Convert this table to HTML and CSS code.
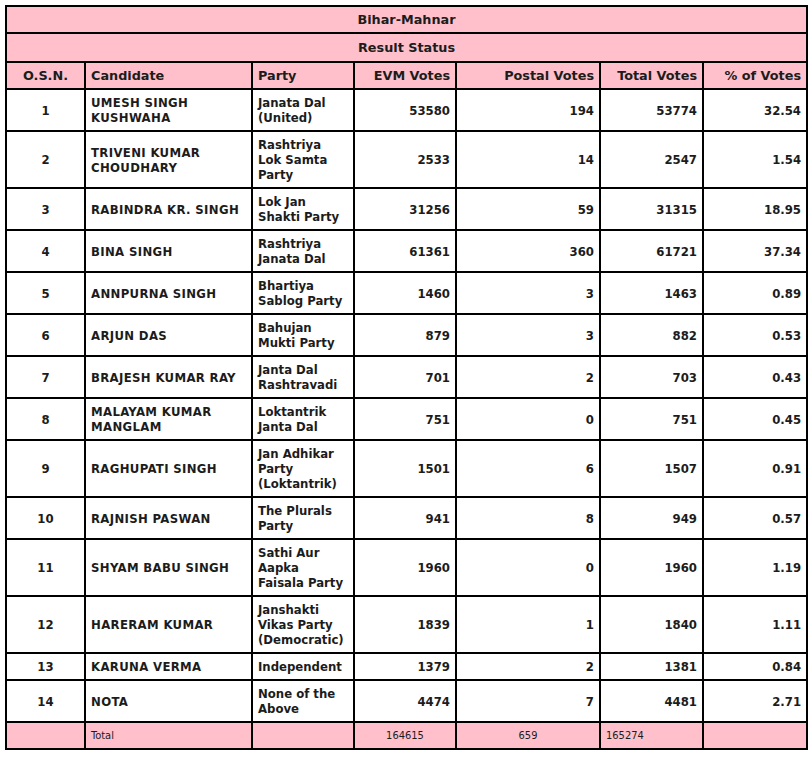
FILE: index.html
```html
<!DOCTYPE html>
<html>
<head>
<meta charset="utf-8">
<link rel="stylesheet" href="styles.css">
</head>
<body>
<table class="result">
  <colgroup>
    <col class="c-sn"><col class="c-cand"><col class="c-party"><col class="c-evm"><col class="c-postal"><col class="c-total"><col class="c-pct">
  </colgroup>
  <thead>
    <tr class="title"><th colspan="7">Bihar-Mahnar</th></tr>
    <tr class="title sub"><th colspan="7">Result Status</th></tr>
    <tr class="head">
      <th class="center">O.S.N.</th>
      <th class="left">Candidate</th>
      <th class="left">Party</th>
      <th class="right">EVM Votes</th>
      <th class="right">Postal Votes</th>
      <th class="right">Total Votes</th>
      <th class="right">% of Votes</th>
    </tr>
  </thead>
  <tbody>
    <tr><td class="center">1</td><td class="cand">UMESH SINGH KUSHWAHA</td><td>Janata Dal (United)</td><td class="right">53580</td><td class="right">194</td><td class="right">53774</td><td class="right">32.54</td></tr>
    <tr><td class="center">2</td><td class="cand">TRIVENI KUMAR CHOUDHARY</td><td>Rashtriya Lok Samta Party</td><td class="right">2533</td><td class="right">14</td><td class="right">2547</td><td class="right">1.54</td></tr>
    <tr><td class="center">3</td><td class="cand">RABINDRA KR. SINGH</td><td>Lok Jan Shakti Party</td><td class="right">31256</td><td class="right">59</td><td class="right">31315</td><td class="right">18.95</td></tr>
    <tr><td class="center">4</td><td class="cand">BINA SINGH</td><td>Rashtriya Janata Dal</td><td class="right">61361</td><td class="right">360</td><td class="right">61721</td><td class="right">37.34</td></tr>
    <tr><td class="center">5</td><td class="cand">ANNPURNA SINGH</td><td>Bhartiya Sablog Party</td><td class="right">1460</td><td class="right">3</td><td class="right">1463</td><td class="right">0.89</td></tr>
    <tr><td class="center">6</td><td class="cand">ARJUN DAS</td><td>Bahujan Mukti Party</td><td class="right">879</td><td class="right">3</td><td class="right">882</td><td class="right">0.53</td></tr>
    <tr><td class="center">7</td><td class="cand">BRAJESH KUMAR RAY</td><td>Janta Dal Rashtravadi</td><td class="right">701</td><td class="right">2</td><td class="right">703</td><td class="right">0.43</td></tr>
    <tr><td class="center">8</td><td class="cand">MALAYAM KUMAR MANGLAM</td><td>Loktantrik Janta Dal</td><td class="right">751</td><td class="right">0</td><td class="right">751</td><td class="right">0.45</td></tr>
    <tr><td class="center">9</td><td class="cand">RAGHUPATI SINGH</td><td>Jan Adhikar Party (Loktantrik)</td><td class="right">1501</td><td class="right">6</td><td class="right">1507</td><td class="right">0.91</td></tr>
    <tr><td class="center">10</td><td class="cand">RAJNISH PASWAN</td><td>The Plurals Party</td><td class="right">941</td><td class="right">8</td><td class="right">949</td><td class="right">0.57</td></tr>
    <tr><td class="center">11</td><td class="cand">SHYAM BABU SINGH</td><td>Sathi Aur Aapka Faisala Party</td><td class="right">1960</td><td class="right">0</td><td class="right">1960</td><td class="right">1.19</td></tr>
    <tr><td class="center">12</td><td class="cand">HARERAM KUMAR</td><td>Janshakti Vikas Party (Democratic)</td><td class="right">1839</td><td class="right">1</td><td class="right">1840</td><td class="right">1.11</td></tr>
    <tr><td class="center">13</td><td class="cand">KARUNA VERMA</td><td>Independent</td><td class="right">1379</td><td class="right">2</td><td class="right">1381</td><td class="right">0.84</td></tr>
    <tr><td class="center">14</td><td class="cand">NOTA</td><td>None of the Above</td><td class="right">4474</td><td class="right">7</td><td class="right">4481</td><td class="right">2.71</td></tr>
  </tbody>
  <tfoot>
    <tr class="foot"><td></td><td>Total</td><td></td><td class="center">164615</td><td class="center">659</td><td>165274</td><td></td></tr>
  </tfoot>
</table>
</body>
</html>
```

FILE: styles.css
```css
html, body {
  margin: 0;
  padding: 0;
  background: #ffffff;
}
body {
  padding: 5px 0 0 5px;
}
.result {
  border-collapse: collapse;
  width: 802px;
  table-layout: fixed;
  font-family: "DejaVu Sans Condensed", "DejaVu Sans", Verdana, sans-serif;
  font-weight: bold;
  font-size: 13px;
  line-height: 15px;
  color: #1c1c1c;
}
.c-sn { width: 79px; }
.c-cand { width: 167px; }
.c-party { width: 102px; }
.c-evm { width: 102px; }
.c-postal { width: 144px; }
.c-total { width: 103px; }
.c-pct { width: 104px; }
.result th,
.result td {
  border: 2px solid #000;
  padding: 5px 5px;
  text-align: left;
  vertical-align: middle;
  overflow: hidden;
}
.result th {
  font-family: "DejaVu Sans", Verdana, sans-serif;
  font-size: 12.8px;
  font-weight: bold;
}
.result .title th {
  background: #ffc0cb;
  text-align: center;
  padding: 5px 5px;
}
.result .title.sub th {
  padding: 6px 5px 6px;
}
.result .head th {
  background: #ffc0cb;
}
.result .cand {
  letter-spacing: 0.35px;
}
.result .center { text-align: center; }
.result .left { text-align: left; }
.result .right { text-align: right; }
.result .foot td {
  background: #ffc0cb;
  font-weight: normal;
  font-size: 11px;
  font-family: "DejaVu Sans Condensed", "DejaVu Sans", Verdana, sans-serif;
}
```
